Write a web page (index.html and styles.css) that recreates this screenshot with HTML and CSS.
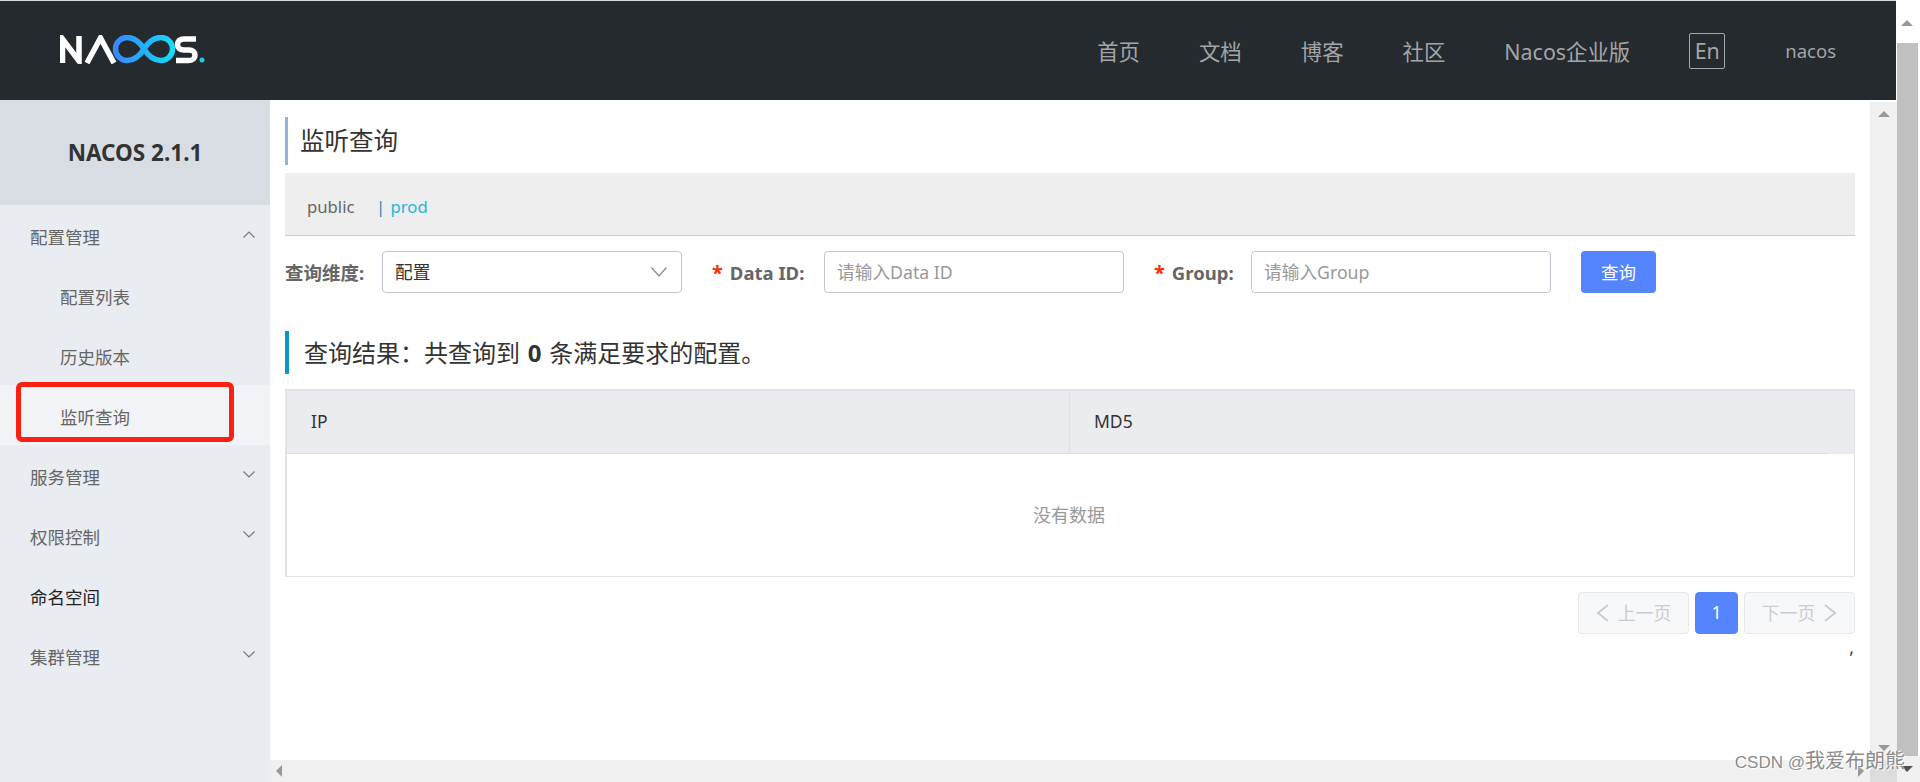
FILE: index.html
```html
<!DOCTYPE html>
<html lang="zh-CN">
<head>
<meta charset="utf-8">
<title>Nacos</title>
<link rel="stylesheet" href="styles.css">
</head>
<body>
<div class="page">
  <div class="left">
    <header class="topbar">
      <svg class="logo" width="148" height="29" viewBox="0 0 148 29" aria-label="NACOS">
        <defs>
          <linearGradient id="inf" gradientUnits="userSpaceOnUse" x1="54" y1="14" x2="114" y2="14">
            <stop offset="0" stop-color="#3a86ff"/>
            <stop offset="0.55" stop-color="#22b4fa"/>
            <stop offset="1" stop-color="#19dcf6"/>
          </linearGradient>
        </defs>
        <path class="logo-w" d="M2.5 28V4L19 26V1"/>
        <path class="logo-w" d="M27 28L40.5 3L54 28"/>
        <path class="logo-inf" stroke="url(#inf)" d="M84 14C79 6 74 2.5 67 2.5A11.5 11.5 0 0 0 67 25.5C74 25.5 79 22 84 14C89 6 94 2.5 101 2.5A11.5 11.5 0 0 1 101 25.5C94 25.5 89 22 84 14"/>
        <path class="logo-w" d="M136 4H124C119.500 4 117.500 6.500 117.500 9.500C117.500 13 120 15 124 15H129C133 15 135 17.500 135 20.200C135 23 133 25.500 129 25.500H116"/>
        <circle cx="142" cy="25" r="2.500" fill="#1fc8e8"/>
      </svg>
      <nav class="nav">
        <span>首页</span><span>文档</span><span>博客</span><span>社区</span><span>Nacos企业版</span>
        <span class="lang">En</span><span class="user">nacos</span>
      </nav>
    </header>
    <div class="below">
      <aside class="side">
        <div class="brand">NACOS 2.1.1</div>
        <div class="item">配置管理<svg class="chev" width="12" height="7" viewBox="0 0 12 7"><path d="M.5 6.500L6 1L11.500 6.500"/></svg></div>
        <div class="item sub">配置列表</div>
        <div class="item sub">历史版本</div>
        <div class="item sub active">监听查询<span class="mark"></span></div>
        <div class="item">服务管理<svg class="chev" width="12" height="7" viewBox="0 0 12 7"><path d="M.5 .5L6 6L11.500 .5"/></svg></div>
        <div class="item">权限控制<svg class="chev" width="12" height="7" viewBox="0 0 12 7"><path d="M.5 .5L6 6L11.500 .5"/></svg></div>
        <div class="item dark">命名空间</div>
        <div class="item">集群管理<svg class="chev" width="12" height="7" viewBox="0 0 12 7"><path d="M.5 .5L6 6L11.500 .5"/></svg></div>
      </aside>
      <div class="work">
        <div class="work-row">
          <main class="content">
            <h1 class="title">监听查询</h1>
            <div class="ns"><span class="ns-a">public</span><span class="ns-sep">|</span><span class="ns-b">prod</span></div>
            <div class="form">
              <label class="lab l1">查询维度:</label>
              <div class="ctl select">配置<svg width="16" height="10" viewBox="0 0 16 10"><path d="M.5 .5L8 9L15.500 .5"/></svg></div>
              <label class="lab l2"><i>*</i>Data ID:</label>
              <div class="ctl ph">请输入Data ID</div>
              <label class="lab l3"><i>*</i>Group:</label>
              <div class="ctl ph">请输入Group</div>
              <button class="btn">查询</button>
            </div>
            <div class="result">查询结果：共查询到 <b>0</b> 条满足要求的配置。</div>
            <div class="table">
              <div class="thead"><div class="th">IP</div><div class="th th2">MD5</div></div>
              <div class="empty">没有数据</div>
            </div>
            <div class="pager">
              <span class="pg"><svg width="13" height="18" viewBox="0 0 13 18"><path d="M12 1L2 9L12 17"/></svg>上一页</span>
              <span class="pg cur">1</span>
              <span class="pg">下一页<svg width="13" height="18" viewBox="0 0 13 18"><path d="M1 1L11 9L1 17"/></svg></span>
            </div>
            <div class="comma">,</div>
          </main>
          <div class="vbar"><span class="tri up"></span><span class="tri down"></span></div>
        </div>
        <div class="hbar">
          <div class="htrack"><span class="tri lft"></span><span class="tri rgt"></span></div>
          <div class="corner"></div>
        </div>
      </div>
    </div>
  </div>
  <div class="outer">
    <div class="outer-top"><span class="tri up"></span></div>
    <div class="thumb"></div>
    <div class="outer-bot"><span class="tri dn-dark"></span></div>
  </div>
</div>
<div class="wm"><span class="wm-l">CSDN @</span>我爱布朗熊</div>
</body>
</html>
```
FILE: styles.css
```css
* { box-sizing: border-box; }
html, body { margin: 0; height: 782px; overflow: hidden; background: #fff; }
body { font-family: "Noto Sans", "Noto Sans CJK SC", sans-serif; font-size: 17.5px; color: #333; position: relative; }

.page { display: flex; height: 782px; }
.left { flex: 1; min-width: 0; display: flex; flex-direction: column; }

.topbar { height: 100px; margin-right: 1px; border-top: 1px solid #d8d8d8; background: #252a2e; display: flex; align-items: center; justify-content: space-between; padding: 0 60px; }
.logo { display: block; margin-top: -3px; }
.logo-w { fill: none; stroke: #fff; stroke-width: 5.5; stroke-linejoin: miter; }
.logo-inf { fill: none; stroke-width: 5.5; }
.nav { display: flex; align-items: center; gap: 59px; font-size: 21.400px; color: #a3a5a7; }
.lang { width: 36px; height: 36px; border: 1px solid #a3a5a7; border-radius: 2px; display: flex; align-items: center; justify-content: center; }
.user { font-size: 18.500px; margin-left: 1px; }

.below { flex: 1; min-height: 0; display: flex; }
.side { width: 270px; background: #e9ecf1; color: #666; }
.brand { height: 105px; background: #d8dde4; display: flex; align-items: center; justify-content: center; font-size: 22.500px; font-weight: 700; color: #333; }
.item { height: 60px; padding: 2px 15px 0 30px; display: flex; align-items: center; justify-content: space-between; font-size: 17.500px; position: relative; }
.sub { padding-left: 60px; }
.dark { color: #222; }
.active { background: #f2f3f7; }
.chev { display: block; margin-top: -3px; }
.chev path { fill: none; stroke: #777; stroke-width: 1.200; }
.mark { position: absolute; left: 16px; top: -3px; width: 218px; height: 60px; border: 5px solid #ff2015; border-radius: 6px; }

.work { flex: 1; min-width: 0; display: flex; flex-direction: column; }
.work-row { flex: 1; min-height: 0; display: flex; }
.content { flex: 1; min-width: 0; padding: 17px 15px 0; }
.title { margin: 0 0 8px; height: 48px; border-left: 3px solid #8ab7dd; padding-left: 12px; font-size: 24.500px; font-weight: 400; line-height: 48px; color: #333; }
.ns { height: 63px; background: #eee; border-bottom: 1px solid #ccc; display: flex; align-items: center; padding: 4px 0 0 22px; color: #666; font-size: 16.700px; }
.ns-a { width: 69px; }
.ns-sep { color: #2f86b8; width: 14.500px; }
.ns-b { color: #21b8dc; }

.form { margin-top: 15px; height: 42px; display: flex; align-items: center; }
.lab { flex: none; font-weight: 700; color: #666; font-size: 18.500px; }
.lab i { font-style: normal; color: #ff3000; margin-right: 7px; font-size: 20px; }
.l1 { width: 97px; }
.l2 { width: 112px; margin-left: 30px; }
.l3 { width: 97px; margin-left: 30px; }
.ctl { flex: none; width: 300px; height: 42px; border: 1px solid #c4c6cf; border-radius: 4px; padding: 0 12px 2px; display: flex; align-items: center; justify-content: space-between; font-size: 17.700px; }
.ph { color: #999; }
.select svg { margin: 2px 2px 0 0; }
.select path { fill: none; stroke: #888; stroke-width: 1.200; }
.btn { flex: none; width: 75px; height: 42px; margin-left: 30px; border: 0; border-radius: 4px; background: #5584ff; color: #fff; font: inherit; padding: 0 0 2px; }

.result { margin-top: 38px; height: 43px; border-left: 4px solid #0a97c9; padding-left: 15px; font-size: 24px; line-height: 43px; color: #333; word-spacing: 1.500px; }
.table { margin-top: 15px; height: 188px; border-style: solid; border-color: #e2e3e7; border-width: 2px 1px 1px 2px; }
.thead { height: 63px; display: grid; grid-template-columns: 782px 1fr; color: #333; background: linear-gradient(#dcdde1, #dcdde1) left bottom / calc(100% - 26px) 1px no-repeat, #ebecf0; }
.th { display: flex; align-items: center; padding: 0 0 3px 24px; }
.th2 { border-left: 1px solid #e0e1e5; }
.empty { height: 122px; display: flex; align-items: center; justify-content: center; color: #999; font-size: 18px; padding: 0 3px 3px 0; }

.pager { margin-top: 15px; display: flex; justify-content: flex-end; gap: 6px; font-size: 17.800px; }
.pg { width: 111px; height: 42px; background: #f7f8fa; border: 1px solid #e6e7eb; border-radius: 4px; color: #ccc; display: flex; align-items: center; justify-content: center; gap: 9px; padding-bottom: 2px; }
.pg svg { margin-top: 2px; }
.pg path { fill: none; stroke: #ccc; stroke-width: 2; }
.cur { width: 43px; background: #5584ff; border-color: #5584ff; color: #fff; }
.comma { text-align: right; padding-right: 1px; line-height: 20px; margin-top: 3px; color: #333; }

.vbar { width: 27px; margin-top: 2px; background: #f0f0f0; display: flex; flex-direction: column; align-items: center; justify-content: space-between; padding: 9px 0 9px; }
.hbar { height: 22px; display: flex; }
.htrack { flex: 1; background: #f0f0f0; display: flex; align-items: center; justify-content: space-between; padding: 0 6px; }
.corner { width: 27px; background: #dcdcdc; }

.tri { display: block; width: 0; height: 0; border-style: solid; border-color: transparent; }
.up { border-width: 0 6px 6px; border-bottom-color: #999; }
.down { border-width: 6px 6px 0; border-top-color: #999; }
.lft { border-width: 6px 6px 6px 0; border-right-color: #999; }
.rgt { border-width: 6px 0 6px 6px; border-left-color: #999; }
.dn-dark { border-width: 6px 6px 0; border-top-color: #505050; }

.outer { width: 23px; display: flex; flex-direction: column; background: #fff; }
.outer-top { height: 43px; display: flex; justify-content: center; padding: 20px 3px 0 0; }
.thumb { flex: 1; width: 21px; background: #c0c0c0; }
.outer-bot { height: 26px; background: #f0f0f0; display: flex; justify-content: center; padding: 10px 3px 0 0; }

.wm { position: absolute; right: 15px; bottom: 6px; font-size: 20px; line-height: 26px; color: #8c8c8c; text-shadow: 1px 1px 1px #fff, -1px -1px 1px #fff; font-family: "Liberation Sans", "Noto Sans CJK SC", sans-serif; }
.wm-l { font-size: 17px; }
```
